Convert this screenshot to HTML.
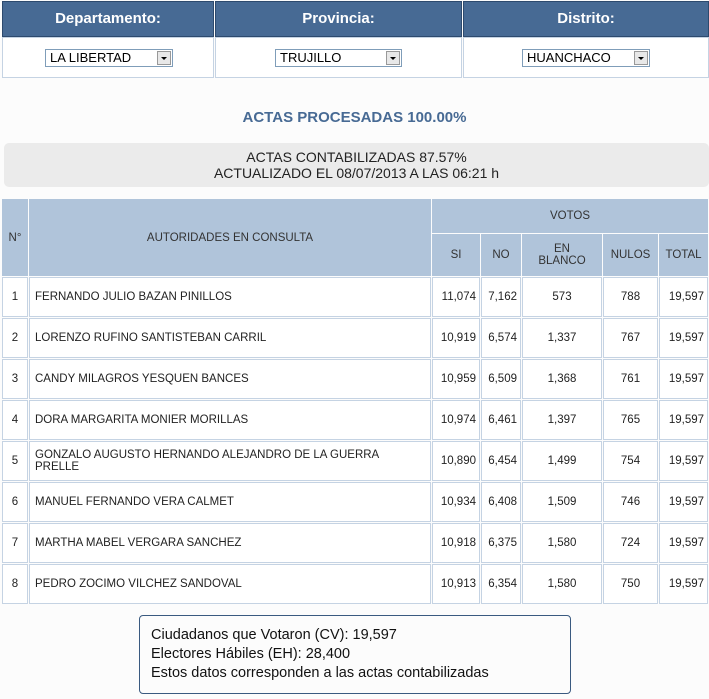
<!DOCTYPE html>
<html><head><meta charset="utf-8"><style>
body{margin:0;background:#fcfcfc;font-family:Arial,"Liberation Sans",sans-serif;width:709px;height:699px;position:relative;overflow:hidden}
.abs{position:absolute}
.hd{background:#476a94;color:#fff;font-weight:bold;font-size:15px;text-align:center;line-height:33px;border:1px solid #2d4a6e;box-sizing:border-box;top:1px;height:36px}
.sc{border:1px solid #c5d3e3;box-sizing:border-box;top:37px;height:41px;background:#fff}
.sel{position:absolute;top:11px;height:18px;border:1px solid #7f9db9;box-sizing:border-box;font-size:13px;line-height:16px;padding-left:4px;background:#fff}
.sel i{position:absolute;right:1px;top:1px;width:14px;height:14px;background:#e8e8e8;border:1px solid #999;box-sizing:border-box}
.sel i:after{content:"";position:absolute;left:3px;top:5px;border-left:3px solid transparent;border-right:3px solid transparent;border-top:3px solid #000}
table{position:absolute;left:1px;top:198px;border-collapse:separate;border-spacing:1px;table-layout:fixed;width:708px}
td{border:1px solid #c5d3e3;background:#fff;font-size:11.5px;color:#222;text-align:center;padding:0 1px;height:40px;box-sizing:border-box;overflow:hidden}
td.n{text-align:left;padding-left:5px}
td.r{text-align:right;padding-right:3px}
.th td{background:#b0c4da;color:#333;font-size:11.5px;border-color:#b0c4da}
</style></head><body>
<div class="abs hd" style="left:2px;width:212px">Departamento:</div>
<div class="abs hd" style="left:215px;width:247px">Provincia:</div>
<div class="abs hd" style="left:463px;width:246px">Distrito:</div>
<div class="abs sc" style="left:2px;width:212px"><div class="sel" style="left:42px;width:128px">LA LIBERTAD<i></i></div></div>
<div class="abs sc" style="left:215px;width:247px"><div class="sel" style="left:59px;width:127px">TRUJILLO<i></i></div></div>
<div class="abs sc" style="left:463px;width:246px"><div class="sel" style="left:58px;width:128px">HUANCHACO<i></i></div></div>
<div class="abs" style="left:0;width:709px;top:109px;text-align:center;color:#476a94;font-weight:bold;font-size:15px">ACTAS PROCESADAS 100.00%</div>
<div class="abs" style="left:4px;width:705px;top:143px;height:44px;background:#ebebeb;border-radius:5px;text-align:center;font-size:14px;line-height:16px;padding-top:6px;box-sizing:border-box;color:#222">ACTAS CONTABILIZADAS 87.57%<br>ACTUALIZADO EL 08/07/2013 A LAS 06:21 h</div>
<table>
<colgroup><col style="width:26px"><col style="width:402px"><col style="width:48px"><col style="width:40px"><col style="width:80px"><col style="width:55px"><col style="width:49px"></colgroup>
<tr class="th"><td rowspan="2" style="height:77px">N°</td><td rowspan="2">AUTORIDADES EN CONSULTA</td><td colspan="5" style="height:34px">VOTOS</td></tr>
<tr class="th"><td style="height:42px">SI</td><td>NO</td><td>EN<br>BLANCO</td><td>NULOS</td><td>TOTAL</td></tr>
<tr><td>1</td><td class="n">FERNANDO JULIO BAZAN PINILLOS</td><td class="r">11,074</td><td class="r">7,162</td><td>573</td><td>788</td><td class="r">19,597</td></tr>
<tr><td>2</td><td class="n">LORENZO RUFINO SANTISTEBAN CARRIL</td><td class="r">10,919</td><td class="r">6,574</td><td>1,337</td><td>767</td><td class="r">19,597</td></tr>
<tr><td>3</td><td class="n">CANDY MILAGROS YESQUEN BANCES</td><td class="r">10,959</td><td class="r">6,509</td><td>1,368</td><td>761</td><td class="r">19,597</td></tr>
<tr><td>4</td><td class="n">DORA MARGARITA MONIER MORILLAS</td><td class="r">10,974</td><td class="r">6,461</td><td>1,397</td><td>765</td><td class="r">19,597</td></tr>
<tr><td>5</td><td class="n">GONZALO AUGUSTO HERNANDO ALEJANDRO DE LA GUERRA<br>PRELLE</td><td class="r">10,890</td><td class="r">6,454</td><td>1,499</td><td>754</td><td class="r">19,597</td></tr>
<tr><td>6</td><td class="n">MANUEL FERNANDO VERA CALMET</td><td class="r">10,934</td><td class="r">6,408</td><td>1,509</td><td>746</td><td class="r">19,597</td></tr>
<tr><td>7</td><td class="n">MARTHA MABEL VERGARA SANCHEZ</td><td class="r">10,918</td><td class="r">6,375</td><td>1,580</td><td>724</td><td class="r">19,597</td></tr>
<tr><td>8</td><td class="n">PEDRO ZOCIMO VILCHEZ SANDOVAL</td><td class="r">10,913</td><td class="r">6,354</td><td>1,580</td><td>750</td><td class="r">19,597</td></tr>
</table>
<div class="abs" style="left:139px;top:615px;width:432px;height:79px;border:1px solid #3a5a80;border-radius:4px;box-sizing:border-box;padding:10px 0 0 11px;font-size:14.5px;line-height:19px;color:#111">Ciudadanos que Votaron (CV): 19,597<br>Electores Hábiles (EH): 28,400<br>Estos datos corresponden a las actas contabilizadas</div>
</body></html>
